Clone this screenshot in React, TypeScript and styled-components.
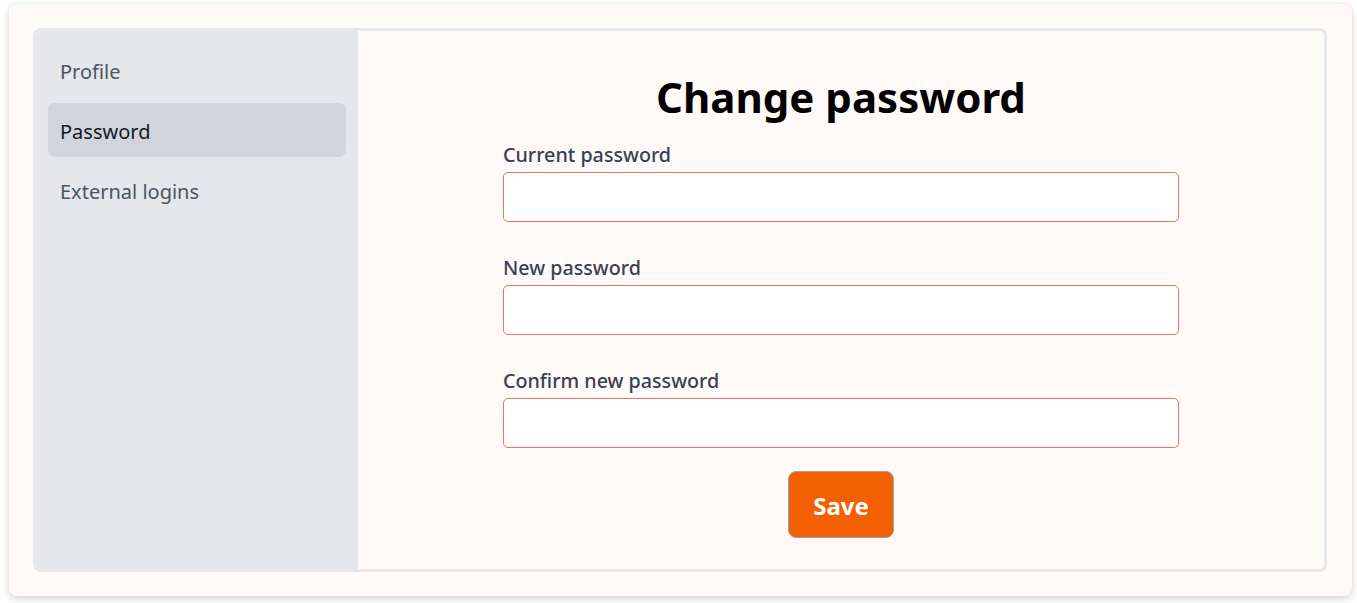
import React, { useState } from 'react';
import styled, { createGlobalStyle } from 'styled-components';

const GlobalStyle = createGlobalStyle`
  * { box-sizing: border-box; }
  html, body { margin: 0; padding: 0; background: #ffffff; }
  body {
    font-family: "Noto Sans", "Open Sans", "Liberation Sans", sans-serif;
  }
`;

const Page = styled.div`
  height: 603px;
  padding: 4px 5px 7px 9px;
  display: flex;
`;

const Card = styled.div`
  flex: 1;
  display: flex;
  padding: 24px 25px 24px 24px;
  background: #fffaf8;
  border-radius: 8px;
  box-shadow: 0 3px 8px rgba(0, 0, 0, 0.16), 0 0 2px rgba(0, 0, 0, 0.08);
`;

const Frame = styled.div`
  flex: 1;
  display: flex;
  border: 3px solid #e5e7eb;
  border-radius: 8px;
  overflow: hidden;
`;

const Sidebar = styled.nav`
  width: 322px;
  background: #e5e7eb;
  padding: 12px;
  display: flex;
  flex-direction: column;
  gap: 6px;
`;

const NavItem = styled.a<{ $active?: boolean }>`
  display: flex;
  align-items: center;
  height: 54px;
  padding: 3px 12px 0;
  border-radius: 7px;
  font-size: 20px;
  text-decoration: none;
  cursor: pointer;
  color: ${p => (p.$active ? '#111827' : '#4b5563')};
  background: ${p => (p.$active ? '#d1d5db' : 'transparent')};
`;

const Content = styled.main`
  flex: 1;
  background: #fffaf8;
  padding-top: 40px;
  display: flex;
  flex-direction: column;
  align-items: center;
`;

const Title = styled.h1`
  margin: 0 0 17px;
  font-size: 42px;
  line-height: 52px;
  font-weight: 700;
  color: #000;
`;

const Form = styled.form`
  width: 676px;
  display: flex;
  flex-direction: column;
  align-items: center;
`;

const Field = styled.div`
  width: 100%;
  display: flex;
  flex-direction: column;
  gap: 3px;
  margin-bottom: 31px;
  &:last-of-type { margin-bottom: 23px; }
`;

const Label = styled.label`
  font-size: 19.7px;
  line-height: 28px;
  padding-top: 1px;
  font-weight: 500;
  color: #374151;
`;

const Input = styled.input`
  height: 50px;
  width: 100%;
  border: 1px solid #ea735f;
  border-radius: 5px;
  background: #ffffff;
  padding: 0 12px;
  font-size: 18px;
  outline: none;
`;

const SaveButton = styled.button`
  width: 106px;
  height: 67px;
  padding-top: 3px;
  border: 1px solid #9ca3af;
  border-radius: 8px;
  background: #f26003;
  color: #ffffff;
  font-family: inherit;
  font-size: 24px;
  font-weight: 700;
  cursor: pointer;
`;

const navItems = ['Profile', 'Password', 'External logins'];
const fields = [
  { id: 'current', label: 'Current password' },
  { id: 'new', label: 'New password' },
  { id: 'confirm', label: 'Confirm new password' },
];

export default function App() {
  const [active, setActive] = useState('Password');

  return (
    <>
      <GlobalStyle />
      <Page>
        <Card>
          <Frame>
            <Sidebar>
              {navItems.map(item => (
                <NavItem key={item} $active={item === active} onClick={() => setActive(item)}>
                  {item}
                </NavItem>
              ))}
            </Sidebar>
            <Content>
              <Title>Change password</Title>
              <Form onSubmit={e => e.preventDefault()}>
                {fields.map(f => (
                  <Field key={f.id}>
                    <Label htmlFor={f.id}>{f.label}</Label>
                    <Input id={f.id} type="password" />
                  </Field>
                ))}
                <SaveButton type="submit">Save</SaveButton>
              </Form>
            </Content>
          </Frame>
        </Card>
      </Page>
    </>
  );
}
